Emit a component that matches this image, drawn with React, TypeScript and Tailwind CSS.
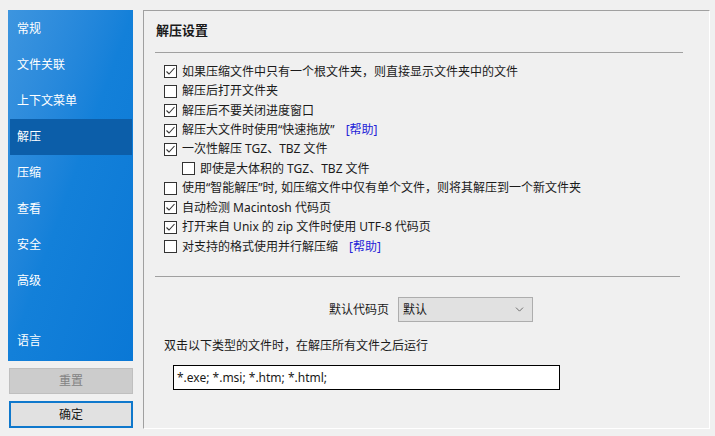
import { ChevronDown } from 'lucide-react'

const navItems = ['常规', '文件关联', '上下文菜单', '解压', '压缩', '查看', '安全', '高级']

type Opt = { label: string; checked: boolean; indent?: boolean; help?: boolean }

const options: Opt[] = [
  { label: '如果压缩文件中只有一个根文件夹，则直接显示文件夹中的文件', checked: true },
  { label: '解压后打开文件夹', checked: false },
  { label: '解压后不要关闭进度窗口', checked: true },
  { label: '解压大文件时使用“快速拖放”', checked: true, help: true },
  { label: '一次性解压 TGZ、TBZ 文件', checked: true },
  { label: '即使是大体积的 TGZ、TBZ 文件', checked: false, indent: true },
  { label: '使用“智能解压”时, 如压缩文件中仅有单个文件，则将其解压到一个新文件夹', checked: false },
  { label: '自动检测 Macintosh 代码页', checked: true },
  { label: '打开来自 Unix 的 zip 文件时使用 UTF-8 代码页', checked: true },
  { label: '对支持的格式使用并行解压缩', checked: false, help: true },
]

function Box({ checked }: { checked: boolean }) {
  return (
    <span className="w-[13px] h-[13px] border border-[#333333] bg-white flex items-center justify-center shrink-0">
      {checked && (
        <svg width="11" height="11" viewBox="0 0 11 11">
          <polyline points="1.5,5.5 4,8 9.5,2" fill="none" stroke="#333333" strokeWidth="1.1" />
        </svg>
      )}
    </span>
  )
}

export default function App() {
  return (
    <div
      className="w-[715px] h-[436px] bg-[#f0f0f0] flex text-[12px] text-[#1a1a1a] overflow-hidden"
      style={{ fontFamily: '"Segoe UI", "Noto Sans", "Noto Sans CJK SC", sans-serif' }}
    >
      {/* sidebar */}
      <div className="w-[125px] ml-[8px] mt-[10px] flex flex-col shrink-0">
        <div className="h-[351px] bg-gradient-to-br from-[#3d95df] via-[#1380d9] to-[#0a78d6] flex flex-col pt-[1px]">
          {navItems.map((item) =>
            item === '解压' ? (
              <div key={item} className="h-[36px] flex items-center bg-[#0c5ea9] ml-[2px] mr-[1px] pl-[7px] text-white">
                {item}
              </div>
            ) : (
              <div key={item} className="h-[36px] flex items-center pl-[9px] text-white">
                {item}
              </div>
            )
          )}
          <div className="h-[24px]" />
          <div className="h-[36px] flex items-center pl-[9px] text-white">语言</div>
        </div>
        <div className="mt-[7px] ml-[1px] h-[26px] bg-[#cccccc] border border-[#bfbfbf] flex items-center justify-center text-[#838383]">
          重置
        </div>
        <div className="mt-[7px] ml-[1px] h-[27px] bg-[#e1e1e1] border-2 border-[#0f78cc] flex items-center justify-center">
          确定
        </div>
      </div>

      {/* panel */}
      <div className="ml-[10px] mt-[10px] w-[567px] h-[419px] border-t border-l border-[#a0a0a0] border-r border-b border-r-white border-b-white flex flex-col">
        <div className="pl-[12px] pt-[10px] font-bold text-[13px] h-[30px] flex items-center">解压设置</div>
        <div className="ml-[11px] mt-[11px] w-[528px] h-px bg-[#a0a0a0]" />
        <div className="flex flex-col mt-[9px] pl-[20px]">
          {options.map((o) => (
            <div key={o.label} className={`h-[19.45px] flex items-center gap-[5px] ${o.indent ? 'pl-[18px]' : ''}`}>
              <Box checked={o.checked} />
              <span className="whitespace-nowrap">{o.label}</span>
              {o.help && <span className="ml-[6px] text-[#2424d8]">[帮助]</span>}
            </div>
          ))}
        </div>
        <div className="ml-[11px] mt-[20px] w-[525px] h-px bg-[#a0a0a0]" />
        <div className="flex items-center mt-[20px] h-[25px]">
          <span className="w-[245px] text-right">默认代码页</span>
          <div className="ml-[9px] w-[135px] h-[25px] bg-[#e1e1e1] border border-[#adadad] flex items-center justify-between pl-[4px] pr-[6px]">
            <span>默认</span>
            <ChevronDown className="w-[13px] h-[13px] text-[#555555]" strokeWidth={1.5} />
          </div>
        </div>
        <div className="pl-[20px] mt-[14px] h-[20px] flex items-center">双击以下类型的文件时，在解压所有文件之后运行</div>
        <div className="ml-[29px] mt-[9px] w-[387px] h-[25px] bg-white border border-black flex items-center pl-[3px]">
          *.exe; *.msi; *.htm; *.html;
        </div>
      </div>
    </div>
  )
}
